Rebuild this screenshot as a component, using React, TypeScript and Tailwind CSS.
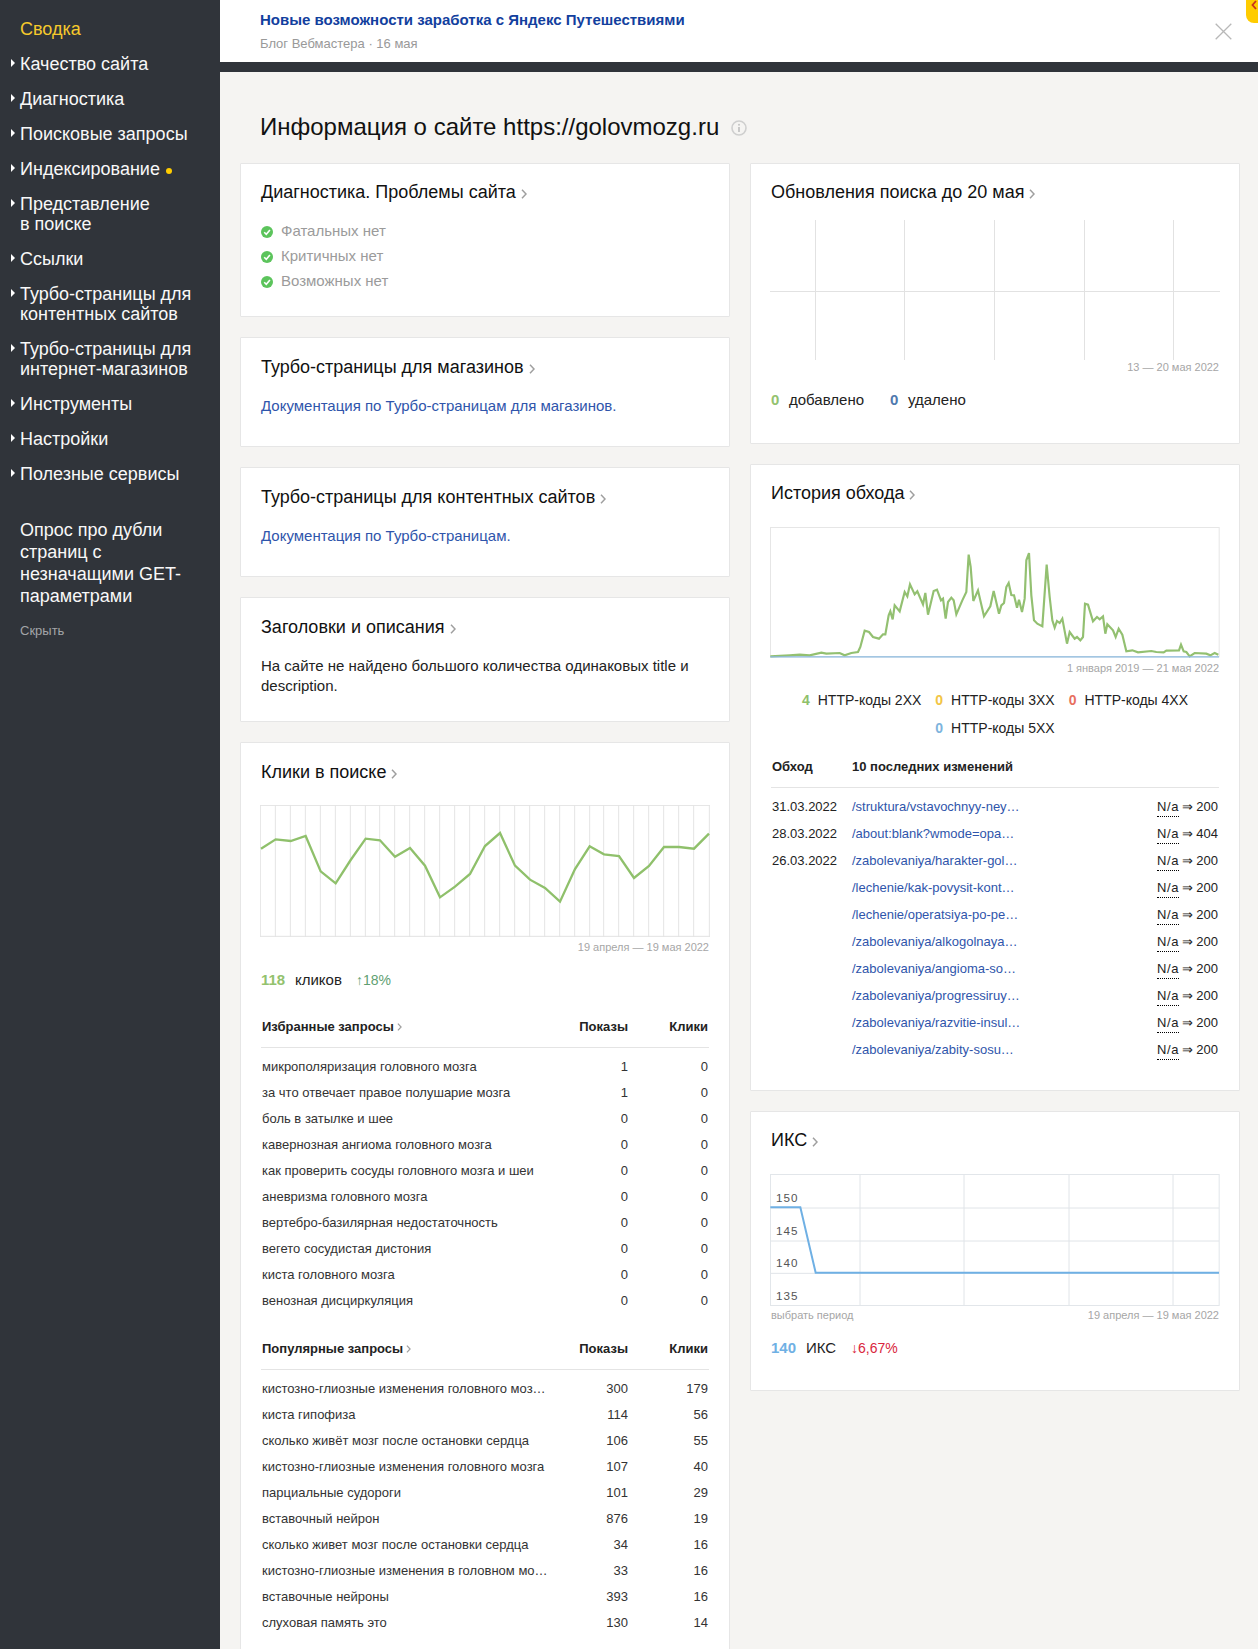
import React from "react";

const FONT = "font-['Liberation_Sans',Arial,sans-serif]";

function Chev({ small }: { small?: boolean }) {
  return (
    <svg
      className={small ? "inline-block w-[5px] h-[8px] ml-[3px] align-[-0px]" : "inline-block w-[6px] h-[10px] ml-[5px] align-[-1px]"}
      viewBox="0 0 6 10"
      fill="none"
    >
      <path d="M1 0.8 L5 5 L1 9.2" stroke="#9f9f9f" strokeWidth="1.5" />
    </svg>
  );
}

function Title({ children, shift }: { children: React.ReactNode; shift?: boolean }) {
  return (
    <div className={`text-[18px] leading-[24px] text-[#111] ${shift ? "mt-px" : ""}`}>
      {children}
      <Chev />
    </div>
  );
}

function Card({ className = "", children }: { className?: string; children: React.ReactNode }) {
  return <section className={`bg-white border border-[#e6e6e6] rounded-[1px] px-5 pt-4 ${className}`}>{children}</section>;
}

function Check() {
  return (
    <svg className="w-[12px] h-[12px] shrink-0" viewBox="0 0 12 12">
      <circle cx="6" cy="6" r="6" fill="#5cc45c" />
      <path d="M3.2 6.2 L5.3 8.3 L8.9 4" fill="none" stroke="#fff" strokeWidth="1.6" />
    </svg>
  );
}

function Arrow() {
  return <span className="absolute left-[-9px] top-[5px] w-0 h-0 border-y-[4px] border-y-transparent border-l-[4px] border-l-white" />;
}

const nav: { t: React.ReactNode; dot?: boolean }[] = [
  { t: "Качество сайта" },
  { t: "Диагностика" },
  { t: "Поисковые запросы" },
  { t: "Индексирование", dot: true },
  { t: <>Представление<br />в поиске</> },
  { t: "Ссылки" },
  { t: <>Турбо-страницы для<br />контентных сайтов</> },
  { t: <>Турбо-страницы для<br />интернет-магазинов</> },
  { t: "Инструменты" },
  { t: "Настройки" },
  { t: "Полезные сервисы" },
];

function Sidebar() {
  return (
    <aside className="w-[220px] shrink-0 bg-[#30343a] pl-5 pt-[19px] text-white">
      <div className="text-[18px] leading-[20px] text-[#f6c92c] mb-[15px]">Сводка</div>
      {nav.map((n, i) => (
        <div key={i} className="relative text-[18px] leading-[20px] mb-[15px] text-[#f8f8f8] whitespace-nowrap">
          <Arrow />
          {n.t}
          {n.dot && <span className="inline-block w-[6px] h-[6px] rounded-full bg-[#ffcc00] ml-[6px] align-[1px]" />}
        </div>
      ))}
      <div className="mt-[35px] text-[18px] leading-[22px] text-[#f8f8f8]">
        Опрос про дубли<br />страниц с<br />незначащими GET-<br />параметрами
      </div>
      <div className="mt-4 text-[13px] leading-[16px] text-[#a3a5a8]">Скрыть</div>
    </aside>
  );
}

function Header() {
  return (
    <header className="relative h-[62px] bg-white pl-[40px] pt-[10px]">
      <div className="text-[15px] leading-[20px] font-bold text-[#12409e]">Новые возможности заработка с Яндекс Путешествиями</div>
      <div className="mt-[5px] text-[13px] leading-[18px] text-[#999]">Блог Вебмастера · 16 мая</div>
      <svg className="absolute left-[995px] top-[23px] w-[17px] h-[17px]" viewBox="0 0 17 17" fill="none">
        <path d="M0.7 0.7 L16.3 16.3 M16.3 0.7 L0.7 16.3" stroke="#b8b8b8" strokeWidth="1.3" />
      </svg>
      <div className="absolute right-0 top-0 w-[12px] h-[23px] bg-[#ffcc00] rounded-bl-[8px] overflow-hidden">
        <svg className="absolute left-[5px] top-0 w-[6px] h-[12px]" viewBox="0 0 6 12" fill="none">
          <path d="M5 1 L1.5 5 L5 9" stroke="#c8321c" strokeWidth="1.8" />
        </svg>
      </div>
    </header>
  );
}

const clicksPts =
  "63,327 107,299 152,304 197,289 242,395 287,431 332,361 377,297 420,302 465,351 510,325 555,378 600,473 645,441 690,403 735,319 780,280 825,378 870,420 915,445 960,486 1005,388 1049,320 1092,344 1137,349 1182,415 1227,379 1272,322 1317,322 1362,327 1407,282";
const clicksX = [61, 106, 151, 196, 241, 286, 331, 376, 419, 464, 509, 554, 599, 644, 689, 734, 779, 824, 869, 914, 959, 1004, 1049, 1091, 1136, 1181, 1226, 1271, 1316, 1361, 1408];

function ClicksChart() {
  return (
    <svg className="block w-[450px] h-[132px] -ml-px mt-[21px]" viewBox="60 196 1350 396" preserveAspectRatio="none">
      <line x1="60" x2="1410" y1="197.5" y2="197.5" stroke="#e6e6e6" strokeWidth="3" />
      <line x1="60" x2="1410" y1="590" y2="590" stroke="#e2e2e2" strokeWidth="3" />
      {clicksX.map((x) => (
        <line key={x} x1={x} x2={x} y1="196" y2="592" stroke="#e4e4e4" strokeWidth="3" />
      ))}
      <polyline points={clicksPts} fill="none" stroke="#8fc06b" strokeWidth="7" />
    </svg>
  );
}

const crawlPts =
  "92,558 150,555 180,553 210,555 245,547 260,550 300,548 315,555 335,548 355,545 362,530 375,481 388,485 400,500 418,505 430,492 437,492 447,435 452,423 459,447 465,405 480,423 495,365 503,378 511,342 525,372 533,363 550,402 557,368 565,433 582,362 592,358 604,390 610,385 618,445 625,395 635,382 642,390 650,432 668,390 680,365 687,253 693,290 701,392 715,360 733,438 752,408 762,362 778,430 785,405 793,398 800,350 807,338 815,374 823,375 832,412 838,388 847,425 855,385 860,270 868,248 875,375 883,450 893,460 908,468 921,283 930,380 938,450 945,472 952,452 960,458 968,445 982,520 990,485 1005,505 1012,500 1022,510 1030,500 1036,400 1045,403 1060,453 1072,440 1080,447 1090,438 1097,490 1103,462 1120,480 1128,500 1137,475 1148,493 1160,543 1178,540 1195,546 1235,542 1250,545 1272,546 1280,541 1318,540 1324,523 1332,543 1340,545 1350,558 1365,548 1400,550 1412,555 1425,548 1436,553";

function CrawlChart() {
  return (
    <svg className="block w-[450px] h-[131px] -ml-px mt-[22px]" viewBox="91 170 1350 393" preserveAspectRatio="none">
      <rect x="92.5" y="171.5" width="1346" height="388" fill="none" stroke="#e6e6e6" strokeWidth="3" />
      <polyline points={crawlPts} fill="none" stroke="#93c071" strokeWidth="6.5" />
      <line x1="92" x2="1438" y1="559.5" y2="559.5" stroke="#8ab8de" strokeWidth="4" />
    </svg>
  );
}

function IksChart() {
  const lbl = [
    ["150", 305],
    ["145", 404],
    ["140", 500],
    ["135", 599],
  ] as const;
  return (
    <svg className="block w-[450px] h-[132px] -ml-px mt-[22px]" viewBox="91 220 1350 396" preserveAspectRatio="none">
      {[322, 421, 518].map((y) => (
        <line key={y} x1="92" x2="1438" y1={y} y2={y} stroke="#e0e4e8" strokeWidth="3" />
      ))}
      {[361, 673, 988, 1300].map((x) => (
        <line key={x} x1={x} x2={x} y1="220" y2="615" stroke="#e0e4e8" strokeWidth="3" />
      ))}
      <rect x="92.5" y="221.5" width="1346" height="393" fill="none" stroke="#e2e6ea" strokeWidth="3" />
      {lbl.map(([t, y]) => (
        <text key={t} x="109" y={y} fontSize="35" fill="#555" letterSpacing="3" fontFamily="'Liberation Sans', Arial, sans-serif">
          {t}
        </text>
      ))}
      <polyline points="92,320 182,320 228,516 1438,516" fill="none" stroke="#6fb0e4" strokeWidth="6" />
    </svg>
  );
}

function UpdatesChart() {
  return (
    <svg className="block w-[450px] h-[140px] -ml-px mt-4" viewBox="0 0 450 140" preserveAspectRatio="none">
      <line x1="0" x2="450" y1="71.5" y2="71.5" stroke="#e2e2e2" />
      {[45.5, 134.5, 224.5, 314.5, 403.5].map((x) => (
        <line key={x} x1={x} x2={x} y1="0" y2="140" stroke="#e2e2e2" />
      ))}
    </svg>
  );
}

function DateLabel({ children }: { children: React.ReactNode }) {
  return <div className="text-right text-[11px] leading-[16px] text-[#a6a6a6]">{children}</div>;
}

function QueryTable({ title, rows }: { title: string; rows: [string, number, number][] }) {
  return (
    <>
      <div className="grid grid-cols-[286px_80px_80px] pb-[10px] border-b border-[#e4e4e4] text-[13px] leading-[20px] font-bold text-[#222] pl-px">
        <div>
          {title}
          <Chev small />
        </div>
        <div className="text-right">Показы</div>
        <div className="text-right">Клики</div>
      </div>
      <div className="mt-[6px]">
        {rows.map(([q, a, b], i) => (
          <div key={i} className="grid grid-cols-[286px_80px_80px] h-[26px] items-center text-[13px] text-[#333] pl-px">
            <div className="truncate">{q}</div>
            <div className="text-right">{a}</div>
            <div className="text-right">{b}</div>
          </div>
        ))}
      </div>
    </>
  );
}

const favorites: [string, number, number][] = [
  ["микрополяризация головного мозга", 1, 0],
  ["за что отвечает правое полушарие мозга", 1, 0],
  ["боль в затылке и шее", 0, 0],
  ["кавернозная ангиома головного мозга", 0, 0],
  ["как проверить сосуды головного мозга и шеи", 0, 0],
  ["аневризма головного мозга", 0, 0],
  ["вертебро-базилярная недостаточность", 0, 0],
  ["вегето сосудистая дистония", 0, 0],
  ["киста головного мозга", 0, 0],
  ["венозная дисциркуляция", 0, 0],
];

const popular: [string, number, number][] = [
  ["кистозно-глиозные изменения головного моз…", 300, 179],
  ["киста гипофиза", 114, 56],
  ["сколько живёт мозг после остановки сердца", 106, 55],
  ["кистозно-глиозные изменения головного мозга", 107, 40],
  ["парциальные судороги", 101, 29],
  ["вставочный нейрон", 876, 19],
  ["сколько живет мозг после остановки сердца", 34, 16],
  ["кистозно-глиозные изменения в головном мо…", 33, 16],
  ["вставочные нейроны", 393, 16],
  ["слуховая память это", 130, 14],
];

const changes: [string, string, string][] = [
  ["31.03.2022", "/struktura/vstavochnyy-ney…", "200"],
  ["28.03.2022", "/about:blank?wmode=opa…", "404"],
  ["26.03.2022", "/zabolevaniya/harakter-gol…", "200"],
  ["", "/lechenie/kak-povysit-kont…", "200"],
  ["", "/lechenie/operatsiya-po-pe…", "200"],
  ["", "/zabolevaniya/alkogolnaya…", "200"],
  ["", "/zabolevaniya/angioma-so…", "200"],
  ["", "/zabolevaniya/progressiruy…", "200"],
  ["", "/zabolevaniya/razvitie-insul…", "200"],
  ["", "/zabolevaniya/zabity-sosu…", "200"],
];

const legend: [string, string, string][] = [
  ["4", "text-[#8fc06b]", "HTTP-коды 2XX"],
  ["0", "text-[#f2c544]", "HTTP-коды 3XX"],
  ["0", "text-[#e8705f]", "HTTP-коды 4XX"],
  ["0", "text-[#7eb4dd]", "HTTP-коды 5XX"],
];

function LeftColumn() {
  return (
    <div className="w-[490px] shrink-0 flex flex-col gap-5">
      <Card className="h-[154px]">
        <Title>Диагностика. Проблемы сайта</Title>
        <div className="mt-[15px] text-[15px] text-[#9b9b9b]">
          {["Фатальных нет", "Критичных нет", "Возможных нет"].map((t) => (
            <div key={t} className="flex items-center h-[25px] gap-2">
              <Check />
              {t}
            </div>
          ))}
        </div>
      </Card>
      <Card className="h-[110px]">
        <Title shift>Турбо-страницы для магазинов</Title>
        <div className="mt-[17px] text-[15px] leading-[20px] text-[#2f55ab]">Документация по Турбо-страницам для магазинов.</div>
      </Card>
      <Card className="h-[110px]">
        <Title shift>Турбо-страницы для контентных сайтов</Title>
        <div className="mt-[17px] text-[15px] leading-[20px] text-[#2f55ab]">Документация по Турбо-страницам.</div>
      </Card>
      <Card className="h-[125px]">
        <Title shift>Заголовки и описания</Title>
        <div className="mt-[17px] text-[15px] leading-[20px] text-[#222]">На сайте не найдено большого количества одинаковых title и description.</div>
      </Card>
      <Card className="pb-10">
        <Title shift>Клики в поиске</Title>
        <ClicksChart />
        <div className="mt-[2px]">
          <DateLabel>19 апреля — 19 мая 2022</DateLabel>
        </div>
        <div className="mt-[15px] flex text-[15px] leading-[20px] text-[#222]">
          <span className="font-bold text-[#93c26e] w-[34px]">118</span>
          <span className="w-[61px]">кликов</span>
          <span className="text-[14px] text-[#5f9f72]">↑18%</span>
        </div>
        <div className="mt-[27px]">
          <QueryTable title="Избранные запросы" rows={favorites} />
        </div>
        <div className="mt-[25px]">
          <QueryTable title="Популярные запросы" rows={popular} />
        </div>
      </Card>
    </div>
  );
}

function RightColumn() {
  return (
    <div className="w-[490px] shrink-0 flex flex-col gap-5">
      <Card className="h-[281px]">
        <Title>Обновления поиска до 20 мая</Title>
        <UpdatesChart />
        <div className="-mt-px">
          <DateLabel>13 — 20 мая 2022</DateLabel>
        </div>
        <div className="mt-[15px] flex text-[15px] leading-[20px] text-[#222]">
          <span className="font-bold text-[#93c26e] w-[18px]">0</span>
          <span className="w-[101px]">добавлено</span>
          <span className="font-bold text-[#4f79ae] w-[18px]">0</span>
          <span>удалено</span>
        </div>
      </Card>
      <Card className="h-[627px]">
        <Title>История обхода</Title>
        <CrawlChart />
        <div className="mt-[2px]">
          <DateLabel>1 января 2019 — 21 мая 2022</DateLabel>
        </div>
        <div className="mt-[14px] flex flex-wrap justify-center gap-x-[14px] gap-y-2 text-[14px] leading-[20px] text-[#222]">
          {legend.map(([n, c, t]) => (
            <div key={t} className="flex gap-[8px]">
              <span className={`font-bold ${c}`}>{n}</span>
              <span>{t}</span>
            </div>
          ))}
        </div>
        <div className="mt-[19px] flex pb-[10px] border-b border-[#e4e4e4] text-[13px] leading-[20px] font-bold text-[#222] pl-px">
          <span className="w-[80px]">Обход</span>
          <span>10 последних изменений</span>
        </div>
        <div className="mt-[5px]">
          {changes.map(([d, u, c], i) => (
            <div key={i} className="flex items-center h-[27px] text-[13px] text-[#222] pl-px">
              <span className="w-[80px] shrink-0">{d}</span>
              <span className="text-[#2f55ab]">{u}</span>
              <span className="ml-auto flex items-baseline pr-px">
                <span className="border-b border-dotted border-black leading-[16px] pb-px tracking-[0.7px]">N/a</span>
                <span className="mx-[3px] leading-[16px]">⇒</span>
                <span>{c}</span>
              </span>
            </div>
          ))}
        </div>
      </Card>
      <Card className="h-[280px]">
        <Title>ИКС</Title>
        <IksChart />
        <div className="mt-px flex justify-between text-[11px] leading-[16px] text-[#a6a6a6]">
          <span>выбрать период</span>
          <span>19 апреля — 19 мая 2022</span>
        </div>
        <div className="mt-[15px] flex text-[15px] leading-[20px] text-[#222]">
          <span className="font-bold text-[#6fb0e4] w-[35px]">140</span>
          <span className="w-[45px]">ИКС</span>
          <span className="text-[14px] text-[#d9263c]">↓6,67%</span>
        </div>
      </Card>
    </div>
  );
}

export default function App() {
  return (
    <div className={`${FONT} flex h-[1649px] w-full overflow-hidden bg-[#f5f4f2]`}>
      <Sidebar />
      <main className="flex-1 min-w-0">
        <Header />
        <div className="h-[10px] bg-[#30343a]" />
        <div className="pl-5 pt-[39px]">
          <h1 className="pl-5 flex items-center text-[24px] leading-[32px] text-[#111] font-normal">
            Информация о сайте https://golovmozg.ru
            <svg className="ml-[12px] mt-[2px] w-[16px] h-[16px]" viewBox="0 0 16 16" fill="none">
              <circle cx="8" cy="8" r="7" stroke="#cfcfcf" strokeWidth="1.6" />
              <circle cx="8" cy="4.8" r="1" fill="#c4c4c4" />
              <path d="M8 7 V12" stroke="#c4c4c4" strokeWidth="1.8" />
            </svg>
          </h1>
          <div className="mt-5 flex gap-5 items-start">
            <LeftColumn />
            <RightColumn />
          </div>
        </div>
      </main>
    </div>
  );
}
